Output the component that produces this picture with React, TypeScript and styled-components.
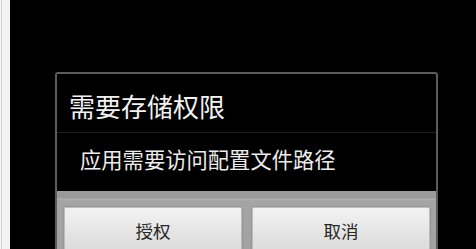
import React from "react";
import styled, { createGlobalStyle } from "styled-components";

const Global = createGlobalStyle`
  html, body { margin: 0; padding: 0; background: #000; overflow: hidden; }
  body { width: 476px; height: 249px; font-family: "Noto Sans CJK SC", "Noto Sans", sans-serif; }
  #root { height: 249px; }
`;

const Screen = styled.div`
  display: flex;
  height: 249px;
  width: 476px;
`;

const SideStrip = styled.div`
  width: 9px;
  flex: none;
  background: #f3f3f3;
  border-left: 1px solid #f8f8f8;
  box-shadow: inset 1px 0 0 #d0d0d0;
`;

const Stage = styled.div`
  flex: 1;
  background: #000;
  padding: 72px 0 0 45px;
  overflow: hidden;
`;

const Dialog = styled.div`
  width: 379px;
  height: 200px;
  border: 2px solid #5c5c5c;
  border-bottom: none;
  border-radius: 3px 3px 0 0;
  display: flex;
  flex-direction: column;
  background: #000;
`;

const Title = styled.div`
  height: 59px;
  box-sizing: border-box;
  padding: 17px 0 0 12px;
  color: #f2f2f2;
  font-size: 26px;
  line-height: 30px;
  border-bottom: 1px solid #1e1e1e;
`;

const Message = styled.div`
  height: 58px;
  box-sizing: border-box;
  padding: 12px 0 0 23px;
  color: #ececec;
  font-size: 21.3px;
  line-height: 28px;
`;

const ButtonBar = styled.div`
  flex: 1;
  display: flex;
  gap: 10px;
  padding: 16px 6px 0 7px;
  background: linear-gradient(to bottom, #9a9a9a 0px, #9a9a9a 7px, #b0b0b0 8px, #a4a4a4 10px, #a2a2a2 100%);
`;

const Button = styled.div`
  flex: 1;
  height: 50px;
  box-sizing: border-box;
  border: 1px solid #bdbdbd;
  border-bottom: none;
  border-radius: 2px 2px 0 0;
  background: linear-gradient(to bottom, #f2f2f2 0%, #e2e2e2 60%, #d8d8d8 100%);
  box-shadow: 0 0 2px rgba(0, 0, 0, 0.25);
  display: flex;
  justify-content: center;
  padding-top: 12px;
  color: #262626;
  font-size: 17.5px;
  line-height: 22px;
`;

export default function App() {
  return (
    <>
      <Global />
      <Screen>
        <SideStrip />
        <Stage>
          <Dialog>
            <Title>需要存储权限</Title>
            <Message>应用需要访问配置文件路径</Message>
            <ButtonBar>
              <Button>授权</Button>
              <Button>取消</Button>
            </ButtonBar>
          </Dialog>
        </Stage>
      </Screen>
    </>
  );
}
